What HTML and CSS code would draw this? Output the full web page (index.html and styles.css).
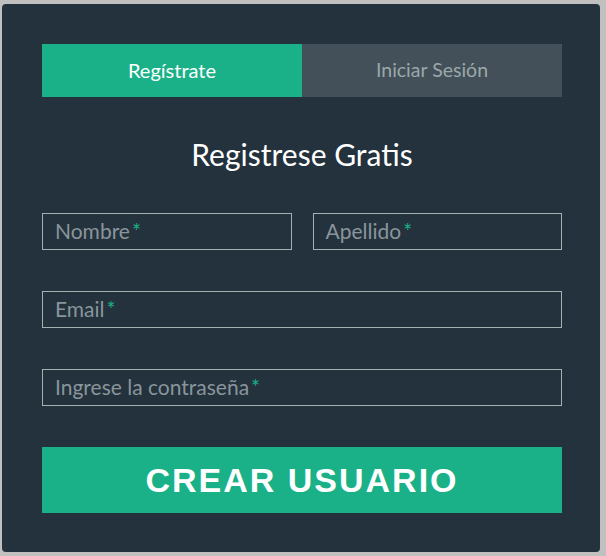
FILE: index.html
```html
<!DOCTYPE html>
<html lang="es">
<head>
<meta charset="utf-8">
<title>Registro</title>
<link rel="stylesheet" href="styles.css">
</head>
<body>
<div class="form-panel">
  <ul class="tabs">
    <li class="tab active">Regístrate</li>
    <li class="tab">Iniciar Sesión</li>
  </ul>
  <h1 class="title">Registrese Gratis</h1>
  <form class="form">
    <div class="row">
      <div class="field">
        <label class="label">Nombre<span class="req">*</span></label>
        <input class="input" type="text">
      </div>
      <div class="field">
        <label class="label">Apellido<span class="req">*</span></label>
        <input class="input" type="text">
      </div>
    </div>
    <div class="field">
      <label class="label">Email<span class="req">*</span></label>
      <input class="input" type="email">
    </div>
    <div class="field">
      <label class="label">Ingrese la contraseña<span class="req">*</span></label>
      <input class="input" type="password">
    </div>
    <button class="submit" type="button">CREAR USUARIO</button>
  </form>
</div>
</body>
</html>
```
FILE: styles.css
```css
html, body {
  margin: 0;
  padding: 0;
  background: #c0c0c0;
}
body {
  padding: 4px 0 0 2px;
  height: 556px;
  box-sizing: border-box;
  overflow: hidden;
}
.form-panel {
  width: 598px;
  height: 548px;
  box-sizing: border-box;
  padding: 40px 38px 39px 40px;
  background: #24323d;
  border-radius: 4px;
  font-family: Lato, "Open Sans", sans-serif;
}
.tabs {
  list-style: none;
  margin: 0;
  padding: 0;
  display: flex;
  height: 53px;
}
.tab {
  flex: 1;
  display: flex;
  align-items: center;
  justify-content: center;
  font-size: 19.5px;
  background: #435059;
  color: #9aa8aa;
  padding-bottom: 2px;
  box-sizing: border-box;
}
.tab.active {
  background: #1ab188;
  color: #ffffff;
  font-size: 20px;
}
.title {
  margin: 0;
  height: 116px;
  display: flex;
  align-items: center;
  justify-content: center;
  font-size: 30px;
  font-weight: 400;
  color: #ffffff;
  padding-bottom: 3px;
  box-sizing: border-box;
}
.form {
  display: flex;
  flex-direction: column;
  gap: 41px;
}
.row {
  display: flex;
  gap: 21px;
}
.row .field {
  flex: 1;
}
.field {
  position: relative;
}
.input {
  display: block;
  width: 100%;
  height: 37px;
  box-sizing: border-box;
  margin: 0;
  padding: 0 12px;
  background: transparent;
  border: 1px solid #a0b3b0;
  border-radius: 0;
  color: #ffffff;
  font-family: inherit;
  font-size: 21px;
}
.label {
  position: absolute;
  left: 13px;
  top: 0;
  line-height: 36px;
  font-size: 21px;
  color: #8a959b;
  pointer-events: none;
}
.req {
  color: #1ab188;
  margin-left: 2px;
}
.submit {
  display: block;
  width: 100%;
  height: 66px;
  margin: 0;
  border: 0;
  border-radius: 0;
  background: #1ab188;
  color: #ffffff;
  font-family: "Liberation Sans", Arial, sans-serif;
  font-weight: bold;
  font-size: 34px;
  letter-spacing: 2px;
  cursor: pointer;
}
```
